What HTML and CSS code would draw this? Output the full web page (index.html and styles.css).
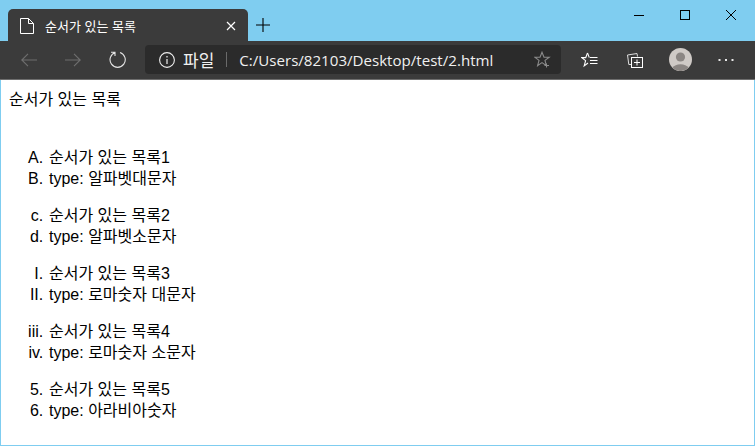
FILE: index.html
```html
<!DOCTYPE html>
<html lang="ko">
<head>
<meta charset="utf-8">
<title>순서가 있는 목록</title>
<link rel="stylesheet" href="styles.css">
</head>
<body>
<div class="window">
  <header class="titlebar">
    <div class="tab">
      <svg class="tab-icon" width="14" height="16" viewBox="0 0 14 16"><path d="M.5.5h8l5 5v10H.5zM8.5.5v5h5" fill="none" stroke="#fff"/></svg>
      <span class="tab-title">순서가 있는 목록</span>
      <svg class="tab-close" width="10" height="10" viewBox="0 0 10 10"><path d="M1 1l8 8M9 1l-8 8" stroke="#fff" stroke-width="1.2"/></svg>
    </div>
    <svg class="new-tab" width="14" height="14" viewBox="0 0 14 14"><path d="M7 0v14M0 7h14" stroke="#000" stroke-width="1.1"/></svg>
    <div class="window-controls">
      <svg width="10" height="10" viewBox="0 0 10 10"><path d="M0 5.5h10" stroke="#000"/></svg>
      <svg width="10" height="10" viewBox="0 0 10 10"><rect x=".5" y=".5" width="9" height="9" fill="none" stroke="#000"/></svg>
      <svg width="10" height="10" viewBox="0 0 10 10"><path d="M0 0l10 10M10 0L0 10" stroke="#000"/></svg>
    </div>
  </header>
  <nav class="toolbar">
    <div class="nav-buttons">
      <svg width="16" height="14" viewBox="0 0 16 14"><path d="M16 7H.8M7 .8L.8 7 7 13.2" fill="none" stroke="#6f6f6f" stroke-width="1.1"/></svg>
      <svg width="16" height="14" viewBox="0 0 16 14"><path d="M0 7h15.2M9 .8L15.2 7 9 13.2" fill="none" stroke="#6f6f6f" stroke-width="1.1"/></svg>
      <svg width="17" height="17" viewBox="0 0 17 17"><path d="M6.3 1.5A7.6 7.6 0 1 0 11 1.5M6 5V1.2H2" fill="none" stroke="#e4e4e4" stroke-width="1.1"/></svg>
    </div>
    <div class="address">
      <svg class="info" width="16" height="16" viewBox="0 0 16 16"><circle cx="8" cy="8" r="7.4" fill="none" stroke="#eee" stroke-width="1.1"/><path d="M8 7v5M8 4v1.4" stroke="#eee" stroke-width="1.2"/></svg>
      <span class="scheme">파일</span>
      <span class="divider"></span>
      <span class="url">C:/Users/82103/Desktop/test/2.html</span>
      <svg class="star" width="17" height="17" viewBox="0 0 17 17"><path d="M8 1.2l2 5h5.2l-4.2 3.2 1.4 5.2L8 11.6l-4.4 3 1.4-5.2L.8 6.2H6z" fill="none" stroke="#8a8a8a" stroke-width="1.1"/><path d="M12.5 12.5v4M10.5 14.5h4.5" stroke="#8a8a8a"/></svg>
    </div>
    <div class="tools">
      <span class="tool"><svg width="17" height="16" viewBox="0 0 17 16"><path d="M6.5 1L4.7 5.6H.8l3.8 3-1.4 5.3L7 11" fill="none" stroke="#fff" stroke-width="1.1"/><path d="M6.5 1l1.8 4.6M9 5.5h7.5M9 8.5h7.5M9 11.5h7.5" fill="none" stroke="#fff" stroke-width="1.1"/></svg></span>
      <span class="tool"><svg width="16" height="16" viewBox="0 0 16 16"><path d="M4 12.5H1.8L.5 3 10 1.5l.5 3" fill="none" stroke="#ddd"/><rect x="4.5" y="5.5" width="11" height="10" fill="none" stroke="#fff"/><path d="M10 7.5v6M7 10.5h6" stroke="#fff"/></svg></span>
      <span class="tool"><svg width="23" height="23" viewBox="0 0 23 23"><circle cx="11.5" cy="11.5" r="11.5" fill="#cfcac6"/><circle cx="11.5" cy="9" r="4.6" fill="#8b8683"/><path d="M3.5 19.8a9 6.5 0 0 1 16 0A11.5 11.5 0 0 1 3.5 19.8z" fill="#8b8683"/></svg></span>
      <span class="tool"><svg width="16" height="4" viewBox="0 0 16 4"><path d="M.5 1h2v2h-2zM7 1h2v2H7zM13.5 1h2v2h-2z" fill="#e8e8e8"/></svg></span>
    </div>
  </nav>
  <main class="page">
    순서가 있는 목록<br><br>
    <ol class="list-upper-alpha">
      <li>순서가 있는 목록1</li>
      <li>type: 알파벳대문자</li>
    </ol>
    <ol class="list-lower-alpha" start="3">
      <li>순서가 있는 목록2</li>
      <li>type: 알파벳소문자</li>
    </ol>
    <ol class="list-upper-roman">
      <li>순서가 있는 목록3</li>
      <li>type: 로마숫자 대문자</li>
    </ol>
    <ol class="list-lower-roman" start="3">
      <li>순서가 있는 목록4</li>
      <li>type: 로마숫자 소문자</li>
    </ol>
    <ol class="list-decimal" start="5">
      <li>순서가 있는 목록5</li>
      <li>type: 아라비아숫자</li>
    </ol>
  </main>
</div>
</body>
</html>
```
FILE: styles.css
```css
@counter-style wide-upper-alpha { system: extends upper-alpha; suffix: ". \200A"; }
@counter-style wide-lower-alpha { system: extends lower-alpha; suffix: ". \200A"; }
@counter-style wide-upper-roman { system: extends upper-roman; suffix: ". \200A"; }
@counter-style wide-lower-roman { system: extends lower-roman; suffix: ". \200A"; }
@counter-style wide-decimal { system: extends decimal; suffix: ". \200A"; }

* { box-sizing: border-box; }
html, body { margin: 0; height: 100%; }
body { overflow: hidden; background: #fff; }
.window {
  height: 446px;
  display: flex;
  flex-direction: column;
  border: 1px solid #7fcdf0;
  border-top: 0;
  font-family: "Liberation Sans", "Noto Sans CJK KR", sans-serif;
}
.titlebar {
  height: 41px;
  flex: none;
  margin: 0 -1px;
  padding: 9px 19px 0 8px;
  background: #7fcdf0;
  display: flex;
  align-items: flex-start;
}
.tab {
  width: 240px;
  height: 32px;
  background: #3b3b3b;
  border-radius: 5px 5px 0 0;
  display: flex;
  align-items: center;
  padding: 0 12px;
  color: #fff;
}
.tab-icon { flex: none; margin-top: 1px; }
.tab-title { margin-left: 11px; font-size: 13px; flex: 1; }
.tab-close { flex: none; margin-top: 1px; }
.new-tab { margin: 9px 0 0 8px; flex: none; }
.window-controls {
  margin-left: auto;
  display: flex;
  gap: 36px;
  padding-top: 1px;
}
.toolbar {
  height: 39px;
  flex: none;
  margin: 0 -1px;
  padding: 4px 0 5px;
  background: #3b3b3b;
  border-bottom: 1px solid #6e6e6e;
  display: flex;
  align-items: stretch;
}
.nav-buttons {
  width: 145px;
  flex: none;
  padding-left: 21px;
  display: flex;
  align-items: center;
  gap: 28px;
}
.address {
  width: 416px;
  flex: none;
  background: #2b2b2b;
  border-radius: 4px;
  display: flex;
  align-items: center;
  padding: 0 10px 0 14px;
  color: #f0f0f0;
}
.info { flex: none; }
.scheme { margin-left: 8px; font-size: 17px; }
.divider { width: 1px; height: 15px; background: #6a6a6a; margin: 0 12px; }
.url { font-family: "Open Sans", "Liberation Sans", sans-serif; font-size: 15.1px; flex: 1; white-space: nowrap; }
.star { flex: none; }
.tools {
  flex: 1;
  display: flex;
  align-items: center;
  padding-left: 6px;
}
.tool {
  width: 45.5px;
  flex: none;
  display: flex;
  justify-content: center;
}
.page {
  flex: 1;
  padding: 9px 8px 8px;
  font-size: 16px;
  line-height: 21px;
  color: #000;
  overflow: hidden;
}
ol { margin: 16px 0; padding-left: 40px; }
ol:last-child { margin-bottom: 0; }
.list-upper-alpha { list-style-type: wide-upper-alpha; }
.list-lower-alpha { list-style-type: wide-lower-alpha; }
.list-upper-roman { list-style-type: wide-upper-roman; }
.list-lower-roman { list-style-type: wide-lower-roman; }
.list-decimal { list-style-type: wide-decimal; }
```
